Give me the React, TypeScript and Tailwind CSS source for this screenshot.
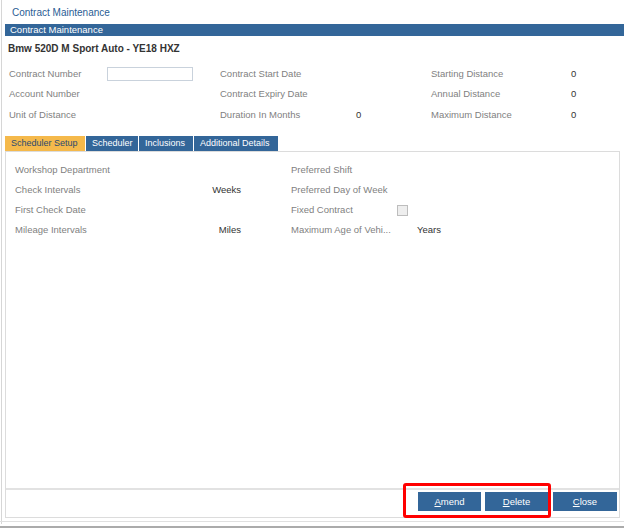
import React from "react";

const topRows = [
  ["Contract Number", "input", "Contract Start Date", "", "Starting Distance", "0"],
  ["Account Number", "", "Contract Expiry Date", "", "Annual Distance", "0"],
  ["Unit of Distance", "", "Duration In Months", "0", "Maximum Distance", "0"],
];

const tabs = [
  { label: "Scheduler Setup", w: "w-[80px]", active: true },
  { label: "Scheduler", w: "w-[52px]", active: false },
  { label: "Inclusions", w: "w-[54px]", active: false },
  { label: "Additional Details", w: "w-[84px]", active: false },
];

const setupRows = [
  ["Workshop Department", "", "Preferred Shift", ""],
  ["Check Intervals", "Weeks", "Preferred Day of Week", ""],
  ["First Check Date", "", "Fixed Contract", "check"],
  ["Mileage Intervals", "Miles", "Maximum Age of Vehi...", "Years"],
];

const Btn = ({ first, rest, w }: { first: string; rest: string; w: string }) => (
  <button
    className={`${w} h-[19px] bg-[#336699] text-white text-[9.5px] leading-[19px] text-center`}
  >
    <span className="underline">{first}</span>
    {rest}
  </button>
);

export default function App() {
  return (
    <div className="relative w-[624px] h-[529px] bg-white overflow-hidden font-['Liberation_Sans',Arial,sans-serif]">
      <div className="ml-[1px] h-[524px] border-l border-[#d6d6d6] pl-[3px] flex flex-col">
        <div className="h-[24px] pl-[7px] pt-[6px] text-[10px] leading-[14px] text-[#2a5d94]">
          Contract Maintenance
        </div>
        <div className="h-[12px] bg-[#336699] pl-[5px] text-[9.5px] leading-[12px] text-white">
          Contract Maintenance
        </div>
        <div className="mt-[6px] h-[14px] pl-[3px] text-[10px] leading-[14px] font-bold text-[#333]">
          Bmw 520D M Sport Auto - YE18 HXZ
        </div>

        <div className="mt-[8px] flex flex-col">
          {topRows.map((r, i) => (
            <div
              key={i}
              className={`flex ${i === 2 ? "h-[22px]" : "h-[20px]"} items-center text-[9.5px] text-[#7f7f7f]`}
            >
              <div className="w-[102px] pl-[4px]">{r[0]}</div>
              <div className="w-[113px]">
                {r[1] === "input" ? (
                  <div className="w-[86px] h-[14px] -mt-[1px] border border-[#c9d2dc] bg-white" />
                ) : null}
              </div>
              <div className="w-[136px]">{r[2]}</div>
              <div className="w-[75px] text-[#333]">{r[3]}</div>
              <div className="w-[140px]">{r[4]}</div>
              <div className="text-[#333]">{r[5]}</div>
            </div>
          ))}
        </div>

        <div className="mt-[10px] flex gap-[1px] h-[15px]">
          {tabs.map((t) => (
            <div
              key={t.label}
              className={`${t.w} h-[15px] pl-[6px] text-[9px] leading-[15px] ${
                t.active ? "bg-[#f5b94b] text-[#2b4a70]" : "bg-[#336699] text-white"
              }`}
            >
              {t.label}
            </div>
          ))}
        </div>

        <div className="w-[615px] h-[367px] border border-[#dcdcdc] flex flex-col">
          <div className="flex-1 pt-[8px] pl-[9px]">
            {setupRows.map((r, i) => (
              <div key={i} className="flex h-[20px] items-center text-[9.5px] text-[#7f7f7f]">
                <div className="w-[180px]">{r[0]}</div>
                <div className="w-[46px] text-right text-[#333]">{r[1]}</div>
                <div className="w-[50px]" />
                <div className="w-[106px]">{r[2]}</div>
                <div className="text-[#333]">
                  {r[3] === "check" ? (
                    <div className="w-[11px] h-[11px] border border-[#bdbdbd] bg-[#eeeeee]" />
                  ) : r[3] ? (
                    <span className="pl-[20px]">{r[3]}</span>
                  ) : null}
                </div>
              </div>
            ))}
          </div>
          <div className="h-[29px] border-t-2 border-[#e2e2e2] flex justify-end items-start pt-[2px] pr-[2px]">
            <div className="flex">
              <Btn first="A" rest="mend" w="w-[63px]" />
              <div className="w-[4px]" />
              <Btn first="D" rest="elete" w="w-[63px]" />
              <div className="w-[5px]" />
              <Btn first="C" rest="lose" w="w-[64px]" />
            </div>
          </div>
        </div>
      </div>
      <div className="h-[1px] bg-[#e0e0e0] -mt-[3px]" />
      <div className="mt-[4px] h-[2px] bg-[#ababab]" />

      <div className="absolute left-[403px] top-[483px] w-[148px] h-[35px] border-[3px] border-[#ff0000] rounded-[3px]" />
    </div>
  );
}
